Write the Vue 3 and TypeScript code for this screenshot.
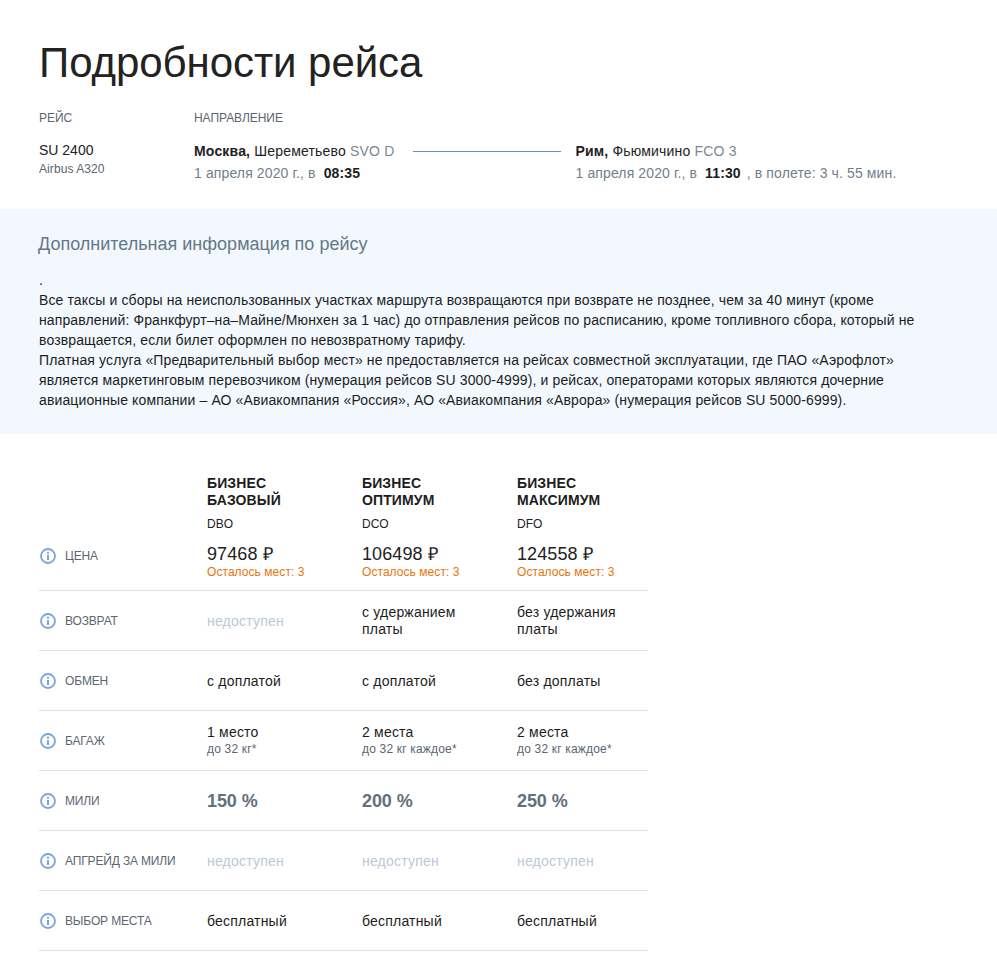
<script setup lang="ts">
interface Cell { text: string; sub?: string; kind?: string }
interface Row { label: string; cells: Cell[] }
const fares = [
  { lines: ['БИЗНЕС', 'БАЗОВЫЙ'], code: 'DBO', price: '97468 ₽' },
  { lines: ['БИЗНЕС', 'ОПТИМУМ'], code: 'DCO', price: '106498 ₽' },
  { lines: ['БИЗНЕС', 'МАКСИМУМ'], code: 'DFO', price: '124558 ₽' },
]
const na: Cell = { text: 'недоступен', kind: 'na' }
const rows: Row[] = [
  { label: 'ВОЗВРАТ', cells: [na, { text: 'с удержанием платы' }, { text: 'без удержания платы' }] },
  { label: 'ОБМЕН', cells: [{ text: 'с доплатой', kind: 'val one' }, { text: 'с доплатой', kind: 'val one' }, { text: 'без доплаты', kind: 'val one' }] },
  { label: 'БАГАЖ', cells: [
    { text: '1 место', sub: 'до 32 кг*' },
    { text: '2 места', sub: 'до 32 кг каждое*' },
    { text: '2 места', sub: 'до 32 кг каждое*' },
  ] },
  { label: 'МИЛИ', cells: [{ text: '150 %', kind: 'miles' }, { text: '200 %', kind: 'miles' }, { text: '250 %', kind: 'miles' }] },
  { label: 'АПГРЕЙД ЗА МИЛИ', cells: [na, na, na] },
  { label: 'ВЫБОР МЕСТА', cells: [{ text: 'бесплатный', kind: 'val one' }, { text: 'бесплатный', kind: 'val one' }, { text: 'бесплатный', kind: 'val one' }] },
]
</script>

<template>
  <div class="page">
    <header class="top">
      <h1 class="title">Подробности рейса</h1>
      <div class="flight">
        <div class="col-flight">
          <div class="cap">РЕЙС</div>
          <div class="num">SU 2400</div>
          <div class="plane">Airbus A320</div>
        </div>
        <div class="col-route">
          <div class="cap">НАПРАВЛЕНИЕ</div>
          <div class="route">
            <div class="point">
              <div class="place"><b>Москва,</b> Шереметьево <span class="code">SVO D</span></div>
              <div class="when">1 апреля 2020 г., в <b class="time">08:35</b></div>
            </div>
            <div class="line"></div>
            <div class="point">
              <div class="place"><b>Рим,</b> Фьюмичино <span class="code">FCO 3</span></div>
              <div class="when">1 апреля 2020 г., в <b class="time">11:30</b> , в полете: 3 ч. 55 мин.</div>
            </div>
          </div>
        </div>
      </div>
    </header>

    <section class="info">
      <h2 class="info-title">Дополнительная информация по рейсу</h2>
      <p class="info-text">.<br>Все таксы и сборы на неиспользованных участках маршрута возвращаются при возврате не позднее, чем за 40 минут (кроме направлений: Франкфурт–на–Майне/Мюнхен за 1 час) до отправления рейсов по расписанию, кроме топливного сбора, который не возвращается, если билет оформлен по невозвратному тарифу.<br>Платная услуга «Предварительный выбор мест» не предоставляется на рейсах совместной эксплуатации, где ПАО «Аэрофлот» является маркетинговым перевозчиком (нумерация рейсов SU 3000-4999), и рейсах, операторами которых являются дочерние авиационные компании – АО «Авиакомпания «Россия», АО «Авиакомпания «Аврора» (нумерация рейсов SU 5000-6999).</p>
    </section>

    <section class="table">
      <div class="head">
        <div class="label-col"></div>
        <div v-for="f in fares" :key="f.code" class="cell">
          <div class="fare-name">{{ f.lines[0] }}<br>{{ f.lines[1] }}</div>
          <div class="fare-code">{{ f.code }}</div>
        </div>
      </div>
      <div class="row price-row">
        <div class="label-col">
          <svg class="ico" viewBox="0 0 16 16"><circle cx="8" cy="8" r="7" fill="none" stroke="#7ba3dc" stroke-width="1.8"/><rect x="7" y="7" width="2" height="5" fill="#7ba3dc"/><rect x="7" y="3.8" width="2" height="2" fill="#7ba3dc"/></svg>
          <span>ЦЕНА</span>
        </div>
        <div v-for="f in fares" :key="f.code" class="cell">
          <div class="price">{{ f.price }}</div>
          <div class="left">Осталось мест: 3</div>
        </div>
      </div>
      <div v-for="r in rows" :key="r.label" class="row">
        <div class="label-col">
          <svg class="ico" viewBox="0 0 16 16"><circle cx="8" cy="8" r="7" fill="none" stroke="#7ba3dc" stroke-width="1.8"/><rect x="7" y="7" width="2" height="5" fill="#7ba3dc"/><rect x="7" y="3.8" width="2" height="2" fill="#7ba3dc"/></svg>
          <span>{{ r.label }}</span>
        </div>
        <div v-for="(c, i) in r.cells" :key="i" class="cell">
          <div :class="c.kind || 'val'">{{ c.text }}</div>
          <div v-if="c.sub" class="sub">{{ c.sub }}</div>
        </div>
      </div>
    </section>
  </div>
</template>

<style>
html, body { margin: 0; background: #fff; }
</style>

<style scoped>
.page {
  width: 997px;
  height: 955px;
  overflow: hidden;
  font-family: "Liberation Sans", Arial, sans-serif;
  color: #1d1d1d;
}
.top { padding: 39px 39px 0; height: 170px; }
.title { margin: 0; font-size: 42px; line-height: 48px; font-weight: 400; color: #222; letter-spacing: -0.06px; }
.flight { display: flex; margin-top: 23px; }
.col-flight { width: 155px; }
.cap { font-size: 12px; line-height: 16px; color: #5b6670; letter-spacing: -0.05px; }
.num { margin-top: 15px; font-size: 14px; line-height: 18px; color: #222; }
.plane { margin-top: 2px; font-size: 12px; line-height: 16px; color: #5b6670; letter-spacing: 0.08px; }
.route { display: flex; margin-top: 16px; }
.place { font-size: 14px; line-height: 18px; color: #222; white-space: nowrap; letter-spacing: 0.18px; }
.code { color: #7b8894; }
.when { margin-top: 4px; font-size: 14px; line-height: 18px; color: #6f7f8c; white-space: nowrap; letter-spacing: 0.12px; }
.time { margin: 0 2px 0 4px; color: #1d1d1d; }
.line { width: 148px; height: 1px; margin: 9px 14px 0 19px; background: #5f98b8; }

.info { height: 225px; box-sizing: border-box; padding: 25px 39px 0 39px; background: #f2f8fe; }
.info-title { margin: 0 0 0 -1px; font-size: 18px; line-height: 20px; font-weight: 400; color: #657887; }
.info-text { margin: 16px 0 0; width: 900px; font-size: 14px; line-height: 20px; color: #1d1d1d; letter-spacing: 0.12px; }

.table { width: 609px; margin: 41px 0 0 39px; }
.head { display: flex; height: 57px; }
.label-col { width: 168px; flex: none; display: flex; align-items: center; gap: 9px; font-size: 12px; color: #5b6670; white-space: nowrap; letter-spacing: -0.15px; }
.cell { width: 155px; flex: none; box-sizing: border-box; padding-right: 30px; }
.fare-name { font-size: 14px; line-height: 17px; font-weight: 700; color: #1d1d1d; letter-spacing: 0.12px; }
.fare-code { margin-top: 7px; font-size: 12px; line-height: 16px; color: #222; }
.row { display: flex; align-items: center; height: 60px; border-bottom: 1px solid #d8e0ea; box-sizing: border-box; }
.price-row { height: 59px; padding-bottom: 11px; }
.price-row .cell { align-self: flex-start; padding-top: 11px; }
.ico { width: 16px; height: 16px; flex: none; margin-left: 1px; }
.price { font-size: 18px; line-height: 22px; color: #222; letter-spacing: 0.1px; }
.left { font-size: 12px; line-height: 14px; color: #e8740c; letter-spacing: 0.06px; }
.val { font-size: 14px; line-height: 17px; color: #1d1d1d; letter-spacing: 0.2px; }
.one { padding-top: 2px; }
.sub { font-size: 12px; line-height: 16px; color: #5b6670; letter-spacing: 0.18px; }
.na { padding-top: 2px; font-size: 14px; line-height: 17px; color: #bcc8d6; letter-spacing: 0.2px; }
.miles { font-size: 18px; line-height: 22px; font-weight: 700; color: #5f7080; letter-spacing: -0.1px; }
</style>
